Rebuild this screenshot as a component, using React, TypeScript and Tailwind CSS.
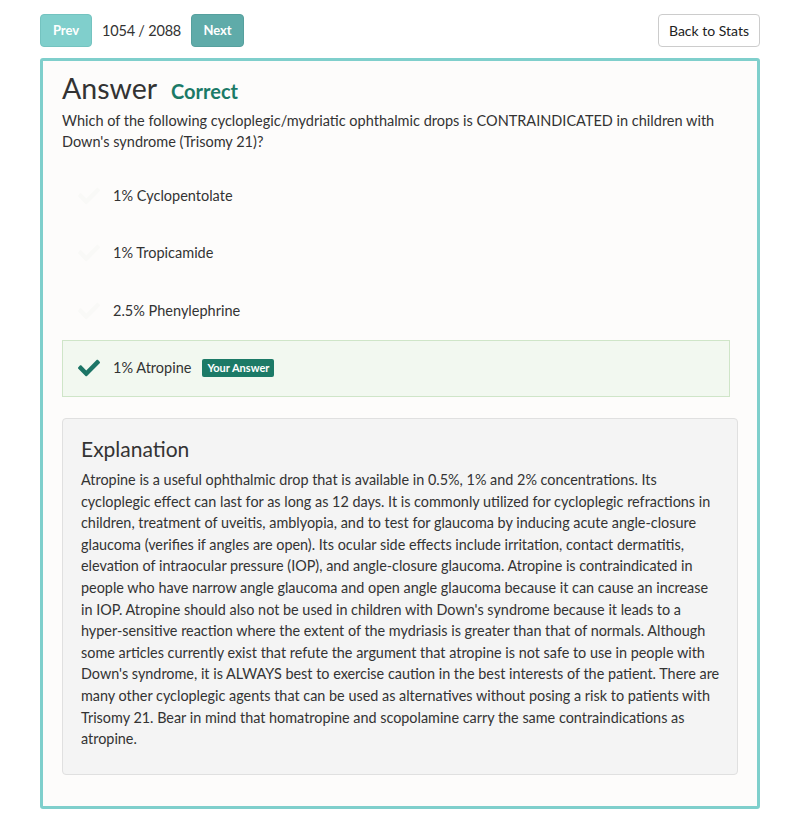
import { FaCheck } from 'react-icons/fa'

const options = [
  { text: '1% Cyclopentolate', picked: false },
  { text: '1% Tropicamide', picked: false },
  { text: '2.5% Phenylephrine', picked: false },
  { text: '1% Atropine', picked: true },
]

const explanation =
  "Atropine is a useful ophthalmic drop that is available in 0.5%, 1% and 2% concentrations. Its cycloplegic effect can last for as long as 12 days. It is commonly utilized for cycloplegic refractions in children, treatment of uveitis, amblyopia, and to test for glaucoma by inducing acute angle-closure glaucoma (verifies if angles are open). Its ocular side effects include irritation, contact dermatitis, elevation of intraocular pressure (IOP), and angle-closure glaucoma. Atropine is contraindicated in people who have narrow angle glaucoma and open angle glaucoma because it can cause an increase in IOP. Atropine should also not be used in children with Down's syndrome because it leads to a hyper-sensitive reaction where the extent of the mydriasis is greater than that of normals. Although some articles currently exist that refute the argument that atropine is not safe to use in people with Down's syndrome, it is ALWAYS best to exercise caution in the best interests of the patient. There are many other cycloplegic agents that can be used as alternatives without posing a risk to patients with Trisomy 21. Bear in mind that homatropine and scopolamine carry the same contraindications as atropine."

export default function App() {
  return (
    <div className="w-[800px] h-[832px] bg-white text-[#333] font-['Lato',sans-serif]">
      <div className="px-[40px] pt-[14px]">
        {/* nav */}
        <div className="flex items-center justify-between h-[33px]">
          <div className="flex items-center">
            <button className="h-[33px] w-[52px] rounded-[4px] bg-[#80cfcc] border border-[#74c3c0] text-white text-[13px] font-bold">
              Prev
            </button>
            <span className="ml-[10px] mr-[10px] text-[14.5px] tracking-[-0.2px] text-[#333]">1054 / 2088</span>
            <button className="h-[33px] w-[53px] rounded-[4px] bg-[#5faba9] border border-[#56a09e] text-white text-[13px] font-bold">
              Next
            </button>
          </div>
          <button className="h-[33px] px-[10px] rounded-[4px] bg-white border border-[#ccc] text-[14px] text-[#222]">
            Back to Stats
          </button>
        </div>

        {/* card */}
        <div className="mt-[11px] border-[3px] border-[#7fcfcc] rounded-[3px] bg-[#fdfcfb] px-[19px] pt-[9px] pb-[31px]">
          <div className="flex items-end">
            <h1 className="text-[28.5px] leading-[36px] text-[#333]">Answer</h1>
            <span className="ml-[14px] text-[20px] leading-[30px] font-bold text-[#1b7a67]">Correct</span>
          </div>
          <p className="text-[14.5px] leading-[21px] mt-[4px]">
            Which of the following cycloplegic/mydriatic ophthalmic drops is CONTRAINDICATED in children with Down's syndrome (Trisomy 21)?
          </p>

          <div className="mt-[15px] mr-[8px]">
            {options.map((o) => (
              <div
                key={o.text}
                className={`flex items-center h-[57.5px] border ${
                  o.picked ? 'bg-[#f2f8f0] border-[#cfe5c8]' : 'border-transparent'
                }`}
              >
                <div className="w-[50px] flex justify-start pl-[15px]">
                  <FaCheck size={22} className={o.picked ? 'text-[#1c7566]' : 'text-[#f9f9f7]'} />
                </div>
                <span className="text-[14.5px]">{o.text}</span>
                {o.picked && (
                  <span className="ml-[11px] bg-[#1c7a67] text-white text-[11px] font-bold leading-[18px] px-[5px] rounded-[2px]">
                    Your Answer
                  </span>
                )}
              </div>
            ))}
          </div>

          <div className="mt-[21px] bg-[#f4f4f4] border border-[#e0e0e0] rounded-[4px] pl-[18px] pr-[15px] pt-[15px] pb-[24px]">
            <h2 className="text-[21px] leading-[30px] text-[#333]">Explanation</h2>
            <p className="mt-[5px] text-[14.4px] leading-[21.6px] text-[#333]">{explanation}</p>
          </div>
        </div>
      </div>
    </div>
  )
}
